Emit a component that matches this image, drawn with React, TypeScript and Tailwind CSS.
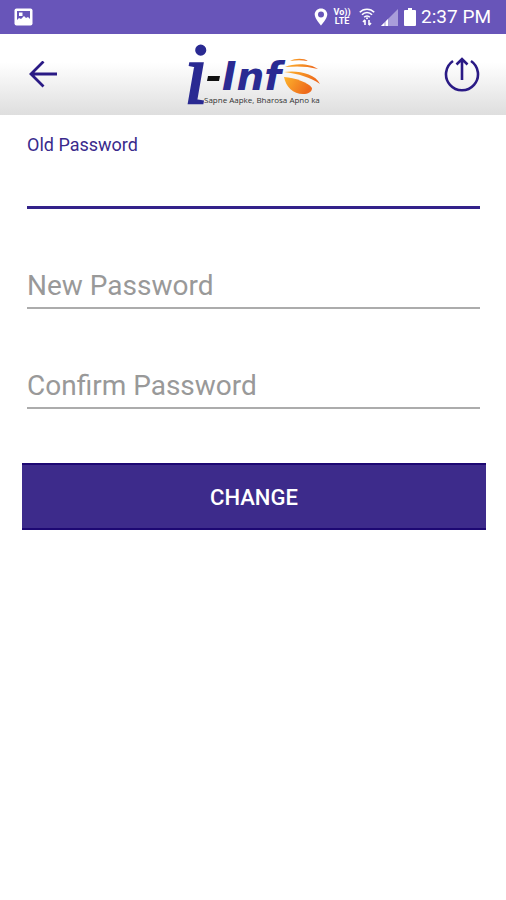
import { useState } from "react";
import type { FormEvent } from "react";
import clsx from "clsx";

interface PasswordFieldProps {
  id: string;
  label: string;
  active?: boolean;
  value: string;
  onChange: (value: string) => void;
}

function StatusBar() {
  return (
    <div className="flex h-[34px] items-center justify-between bg-[#6855b9] pl-3.5 pr-[15px] text-white">
      {/* Picture notification */}
      <svg className="h-[18px] w-[19px]" viewBox="0 0 19 18">
        <rect x="0.5" y="0.5" width="18" height="17" rx="2" fill="#fff" />
        <path d="M3 3h13v8l-2-2-2 1-2-2-3 3-2-1-2 2z" fill="#6855b9" />
        <rect x="5" y="4.5" width="3.5" height="3.5" fill="#fff" />
      </svg>

      <div className="flex items-center">
        <svg className="h-[18px] w-3.5" viewBox="0 0 14 18" fill="currentColor">
          <path
            fillRule="evenodd"
            d="M7 .5C3.4.5.7 3.200.7 6.500.7 10.500 7 17.500 7 17.500s6.300-7 6.300-11C13.300 3.200 10.600.5 7 .5zm0 3a3 3 0 1 1 0 6 3 3 0 0 1 0-6z"
          />
        </svg>
        <div className="ml-[5px] flex w-[18px] flex-col items-center font-[Roboto] text-[9px] font-bold leading-[9px]">
          <span>Vo))</span>
          <span>LTE</span>
        </div>
        <svg
          className="ml-2 h-[18px] w-4"
          viewBox="0 0 16 18"
          fill="none"
          stroke="currentColor"
          strokeWidth="1.6"
        >
          <path d="M.8 4.300C4.500.2 11.500.2 15.200 4.300M3 6.800c2.600-3 7.400-3 10 0M5.200 9.200c1.400-1.700 4.200-1.700 5.600 0" />
          <path d="M6 17v-5M4 14l2-2.200M10 12v5M12 15l-2 2.200" />
          <circle cx="8" cy="10.300" r="1" fill="currentColor" stroke="none" />
        </svg>
        <svg className="ml-1.5 h-[17px] w-[17px]" viewBox="0 0 17 17">
          <path d="M17 0v17H0z" fill="#a99dda" />
          <path d="M8 9v8H0z" fill="#fff" />
          <path d="M4 12v5M7.500 9v8" stroke="#6855b9" strokeWidth="0.6" />
        </svg>
        <svg className="ml-1.5 h-[18px] w-3" viewBox="0 0 12 18" fill="currentColor">
          <path d="M4 0h4v2h3a1 1 0 0 1 1 1v14a1 1 0 0 1-1 1H1a1 1 0 0 1-1-1V3a1 1 0 0 1 1-1h3z" />
        </svg>
        <span className="ml-[5px] whitespace-nowrap font-[Roboto] text-[19px] leading-6">2:37 PM</span>
      </div>
    </div>
  );
}

function Logo() {
  return (
    <svg className="h-[72px] w-[140px] overflow-visible" viewBox="0 0 140 72" role="img" aria-label="i-Info">
      <defs>
        <linearGradient id="globe" x1="0" y1="0" x2="1" y2="0.4">
          <stop offset="0" stopColor="#fdb52c" />
          <stop offset="1" stopColor="#ee6a1c" />
        </linearGradient>
      </defs>
      <text
        x="3"
        y="64"
        fill="#2a2a92"
        stroke="#2a2a92"
        strokeWidth="2"
        fontFamily="Liberation Serif, serif"
        fontSize="86"
        fontStyle="italic"
      >
        i
      </text>
      <path d="M27 37h12l-1 5H26z" fill="#111" />
      <text x="41" y="51" fill="#2a2a92" fontFamily="DejaVu Sans, sans-serif" fontSize="39" fontWeight="700" fontStyle="italic">
        Inf
      </text>
      <g fill="url(#globe)">
        <path d="M109 22c5-3 14-3 18 0-6-1-12-1-18 0z" />
        <path d="M104 28c9-4 25-4 33 2-11-3-22-3-33-2z" />
        <path d="M103 33c13-2 31 1 36 12-10-7-21-10-36-12z" />
        <path d="M103 38c11 1 24 5 28 11 0 4-4 6-9 6-10 0-17-7-19-17z" />
      </g>
      <text x="23" y="64" fill="#333" fontFamily="Open Sans, sans-serif" fontSize="8">
        Sapne Aapke, Bharosa Apno ka
      </text>
    </svg>
  );
}

function Header() {
  return (
    <header className="flex h-[81px] items-center justify-between bg-linear-to-b from-white from-35% to-[#dedede] pl-7 pr-[26px]">
      <button type="button" aria-label="Back" className="text-[#2a1a85]">
        <svg className="h-7 w-[30px]" viewBox="0 0 30 28" fill="none" stroke="currentColor" strokeWidth="2.8">
          <path d="M29 13H3M15.500.5 3 13l12.500 12.500" />
        </svg>
      </button>
      <Logo />
      <button type="button" aria-label="Log out" className="text-[#2a1a85]">
        <svg className="h-9 w-9" viewBox="0 0 36 36" fill="none" stroke="currentColor" strokeWidth="2.600">
          <path d="M9 4A16 16 0 1 0 27 4" />
          <path d="M18 23V2M12.500 7.500 18 2l5.500 5.500" />
        </svg>
      </button>
    </header>
  );
}

function PasswordField({ id, label, active = false, value, onChange }: PasswordFieldProps) {
  return (
    <div className="flex flex-col">
      <label
        htmlFor={id}
        className={clsx("text-[18px] leading-6 text-[#3a2a8c]", !active && !value && "sr-only")}
      >
        {label}
      </label>
      <input
        id={id}
        type="password"
        placeholder={active ? undefined : label}
        value={value}
        onChange={(e) => onChange(e.target.value)}
        className={clsx(
          "h-[52px] w-full bg-transparent pt-1.5 text-[28px] leading-8 outline-none placeholder:text-[#999]",
          active ? "border-b-3 border-[#33228a]" : "border-b-2 border-[#acacac]"
        )}
      />
    </div>
  );
}

export default function App() {
  const [oldPassword, setOldPassword] = useState("");
  const [newPassword, setNewPassword] = useState("");
  const [confirmPassword, setConfirmPassword] = useState("");

  const handleSubmit = (e: FormEvent) => {
    e.preventDefault();
  };

  return (
    <div className="min-h-screen bg-white font-[Roboto,sans-serif]">
      <StatusBar />
      <Header />
      <form onSubmit={handleSubmit} className="pl-[22px] pr-5 pt-[18px]">
        <div className="flex flex-col gap-12 pl-[5px] pr-1.5">
          <PasswordField id="old-password" label="Old Password" active value={oldPassword} onChange={setOldPassword} />
          <PasswordField id="new-password" label="New Password" value={newPassword} onChange={setNewPassword} />
          <PasswordField
            id="confirm-password"
            label="Confirm Password"
            value={confirmPassword}
            onChange={setConfirmPassword}
          />
        </div>
        <button
          type="submit"
          className="mt-[54px] h-[67px] w-full border-y-2 border-[#1d0873] bg-[#3d2b8b] pt-0.5 text-[22px] font-medium text-white"
        >
          CHANGE
        </button>
      </form>
    </div>
  );
}
